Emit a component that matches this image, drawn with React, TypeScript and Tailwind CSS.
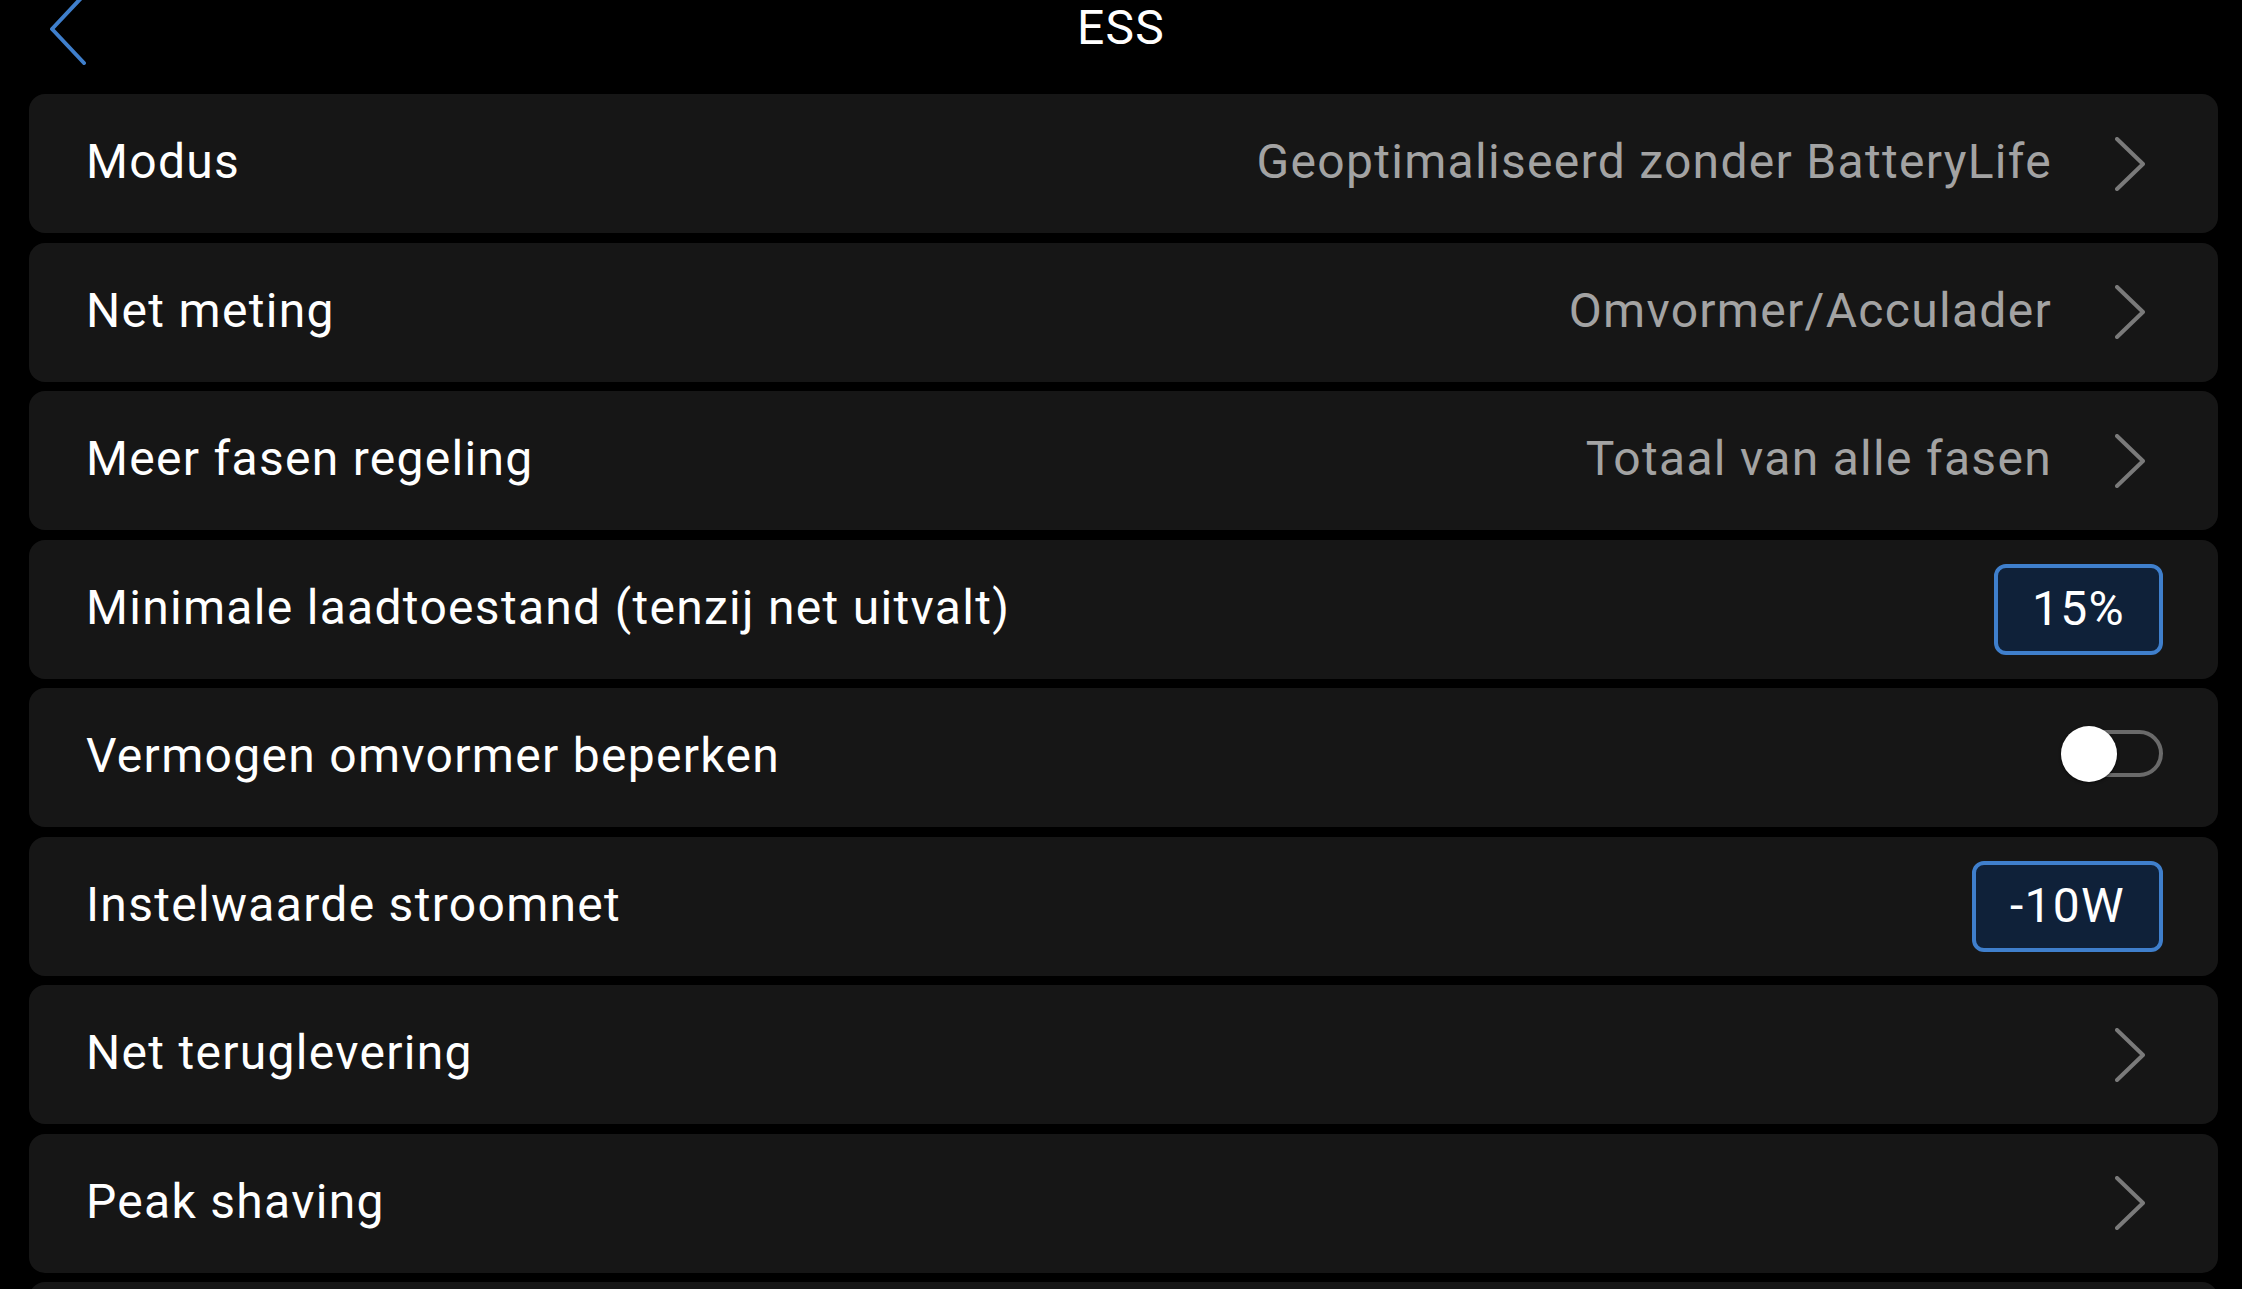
import React from "react";

const font = { fontFamily: "Roboto, 'Noto Sans', sans-serif" };

function Chevron() {
  return (
    <svg width="30" height="54" viewBox="0 0 30 54" className="shrink-0">
      <polyline points="2,2 28,27 2,52" fill="none" stroke="#7a7a7a" strokeWidth="4" strokeLinecap="round" strokeLinejoin="round" />
    </svg>
  );
}

function Card({ children }: { children?: React.ReactNode }) {
  return (
    <div className="h-[139px] shrink-0 rounded-[16px] bg-[#161616] flex items-center pl-[57px]">
      {children}
    </div>
  );
}

function Label({ text }: { text: string }) {
  return <span className="text-[48px] leading-[48px] tracking-[1.3px] text-white pb-[3px] whitespace-nowrap">{text}</span>;
}

function NavRow({ label, value }: { label: string; value?: string }) {
  return (
    <Card>
      <Label text={label} />
      <div className="ml-auto flex items-center pr-[73px]">
        {value && (
          <span className="text-[48px] leading-[48px] tracking-[1.3px] text-[#a3a3a3] pb-[3px] mr-[63px] whitespace-nowrap">{value}</span>
        )}
        <Chevron />
      </div>
    </Card>
  );
}

function BoxRow({ label, value }: { label: string; value: string }) {
  return (
    <Card>
      <Label text={label} />
      <div className="ml-auto pr-[55px]">
        <div className="h-[91px] border-4 border-[#3f7fcc] bg-[#0f2139] rounded-[12px] px-[34px] flex items-center text-[48px] leading-[48px] tracking-[1.3px] text-white">
          {value}
        </div>
      </div>
    </Card>
  );
}

function ToggleRow({ label }: { label: string }) {
  return (
    <Card>
      <Label text={label} />
      <div className="ml-auto pr-[55px] pb-[9px]">
        <div className="relative w-[93px] h-[47px]">
          <div className="absolute inset-0 rounded-full border-4 border-[#6a6a6a]" />
          <div className="absolute left-[-9px] top-[-4px] w-[56px] h-[56px] rounded-full bg-white shadow-[0_1px_3px_rgba(0,0,0,0.6)]" />
        </div>
      </div>
    </Card>
  );
}

export default function App() {
  return (
    <div className="w-full h-[1289px] bg-black overflow-hidden" style={font}>
      <div className="relative h-[94px] flex justify-center items-start">
        <svg width="40" height="72" viewBox="0 0 40 72" className="absolute left-[48px] top-[-7px]">
          <polyline points="36,2 4,36 36,70" fill="none" stroke="#3f7fcc" strokeWidth="4" strokeLinecap="round" strokeLinejoin="round" />
        </svg>
        <span className="text-[48px] leading-[56px] tracking-[1.3px] text-white">ESS</span>
      </div>
      <div className="flex flex-col gap-[9.5px] pl-[29px] pr-[24px]">
        <NavRow label="Modus" value="Geoptimaliseerd zonder BatteryLife" />
        <NavRow label="Net meting" value="Omvormer/Acculader" />
        <NavRow label="Meer fasen regeling" value="Totaal van alle fasen" />
        <BoxRow label="Minimale laadtoestand (tenzij net uitvalt)" value="15%" />
        <ToggleRow label="Vermogen omvormer beperken" />
        <BoxRow label="Instelwaarde stroomnet" value="-10W" />
        <NavRow label="Net teruglevering" />
        <NavRow label="Peak shaving" />
        <Card />
      </div>
    </div>
  );
}
